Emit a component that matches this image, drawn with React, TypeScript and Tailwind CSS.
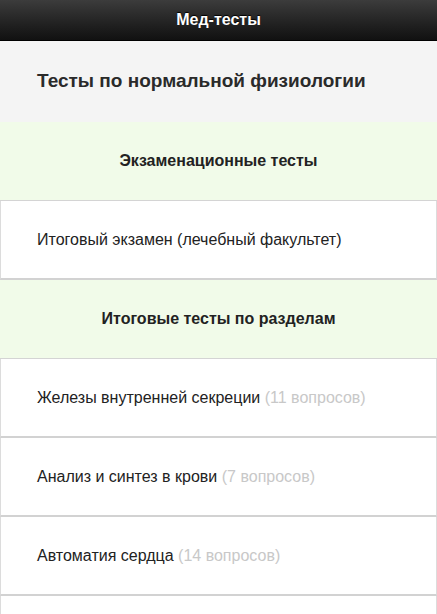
import React from 'react';

interface Test {
  title: string;
  count?: number;
}

const exams: Test[] = [{ title: 'Итоговый экзамен (лечебный факультет)' }];

const sections: Test[] = [
  { title: 'Железы внутренней секреции', count: 11 },
  { title: 'Анализ и синтез в крови', count: 7 },
  { title: 'Автоматия сердца', count: 14 },
];

const Divider: React.FC<{ text: string }> = ({ text }) => (
  <div className="h-[79px] shrink-0 flex items-center justify-center bg-[#f1fbe9] border-b border-[#d4d4d4] text-[16px] font-bold text-[#222]">
    {text}
  </div>
);

const Row: React.FC<{ item: Test }> = ({ item }) => (
  <div className="h-[79px] shrink-0 flex items-center pl-[36px] bg-white border-x border-[#dcdcdc] border-b-2 border-b-[#d2d2d2] text-[16px] text-[#222]">
    <span>
      {item.title}
      {item.count !== undefined && (
        <span className="text-[#c8c8c8]"> ({item.count} вопросов)</span>
      )}
    </span>
  </div>
);

export default function App() {
  return (
    <div className="w-[437px] h-[614px] overflow-hidden flex flex-col bg-white font-['Liberation_Sans',Arial,sans-serif]">
      {/* Header */}
      <div className="h-[41px] shrink-0 flex items-center justify-center bg-gradient-to-b from-[#3c3c3c] to-[#111] border-b border-[#000] text-white text-[16px] font-bold [text-shadow:0_-1px_1px_#000]">
        Мед-тесты
      </div>

      {/* Title */}
      <div className="h-[81px] shrink-0 flex items-center pl-[37px] bg-[#f4f4f4] text-[19px] font-bold text-[#2a2a2a]">
        Тесты по нормальной физиологии
      </div>

      <Divider text="Экзаменационные тесты" />
      {exams.map((t) => (
        <Row key={t.title} item={t} />
      ))}

      <Divider text="Итоговые тесты по разделам" />
      {sections.map((t) => (
        <Row key={t.title} item={t} />
      ))}

      {/* next row, cut off by the window */}
      <div className="flex-1 bg-white border-x border-[#dcdcdc]" />
    </div>
  );
}
